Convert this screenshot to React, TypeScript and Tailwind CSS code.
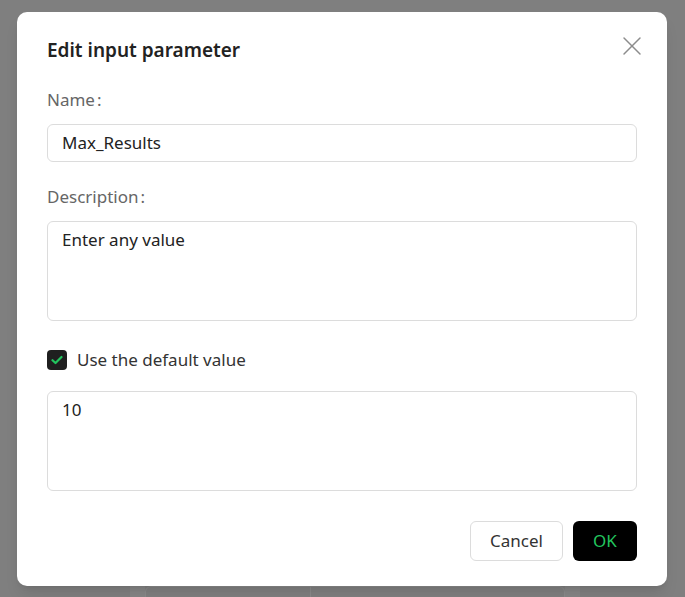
import { X } from "lucide-react";

export default function App() {
    return (
        <div
            className="relative h-[597px] w-[685px] overflow-hidden bg-[#7f7f7f]"
            style={{ fontFamily: "'Noto Sans', Lato, sans-serif" }}
        >
            {/* faint page content behind the overlay */}
            <div className="absolute left-[145px] top-[586px] h-[40px] w-[420px] rounded-[6px] border border-[#8a8a8a]" />
            <div className="absolute left-[310px] top-[586px] h-[20px] w-px bg-[#8a8a8a]" />
            <div className="absolute left-[130px] top-[586px] h-[20px] w-[15px] bg-[#858585]" />
            <div className="absolute left-[565px] top-[586px] h-[20px] w-[15px] bg-[#858585]" />

            <div className="absolute left-[17px] top-[12px] flex h-[574px] w-[650px] flex-col rounded-[10px] bg-white px-[30px] pt-[24px] shadow-lg">
                <div className="flex h-[28px] items-center justify-between">
                    <h2 className="text-[19px] leading-[28px] font-semibold text-[#222]">
                        Edit input parameter
                    </h2>
                    <X
                        className="-mr-[11px] -mt-[8px] text-[#8c8c8c]"
                        size={32}
                        strokeWidth={1.1}
                    />
                </div>

                <label className="mt-[24px] text-[17px] leading-[24px] text-[#666]">
                    Name<span className="ml-[2px]">:</span>
                </label>
                <div className="mt-[12px] flex h-[38px] items-center rounded-[6px] border border-[#dcdcdc] px-[14px] text-[17px] text-[#222]">
                    Max_Results
                </div>

                <label className="mt-[23px] text-[17px] leading-[24px] text-[#666]">
                    Description<span className="ml-[2px]">:</span>
                </label>
                <div className="mt-[12px] h-[100px] rounded-[6px] border border-[#dcdcdc] px-[14px] pt-[6px] text-[17px] leading-[24px] text-[#222]">
                    Enter any value
                </div>

                <div className="mt-[27px] flex h-[24px] items-center gap-[10px]">
                    <span className="flex h-[20px] w-[20px] items-center justify-center rounded-[4px] bg-[#1f1f1f]">
                        <svg
                            width="12"
                            height="10"
                            viewBox="0 0 12 10"
                            fill="none"
                        >
                            <path
                                d="M1.5 5.2 4.5 8 10.5 2"
                                stroke="#22c55e"
                                strokeWidth="2.2"
                                strokeLinecap="round"
                                strokeLinejoin="round"
                            />
                        </svg>
                    </span>
                    <span className="text-[17px] leading-[24px] text-[#333]">
                        Use the default value
                    </span>
                </div>

                <div className="mt-[19px] h-[100px] rounded-[6px] border border-[#dcdcdc] px-[14px] pt-[6px] text-[17px] leading-[24px] text-[#222]">
                    10
                </div>

                <div className="mt-[30px] flex justify-end gap-[10px]">
                    <button className="h-[40px] w-[93px] rounded-[6px] border border-[#dcdcdc] bg-white text-[17px] text-[#333]">
                        Cancel
                    </button>
                    <button className="h-[40px] w-[64px] rounded-[6px] bg-black text-[17px] text-[#22c55e]">
                        OK
                    </button>
                </div>
            </div>
        </div>
    );
}
